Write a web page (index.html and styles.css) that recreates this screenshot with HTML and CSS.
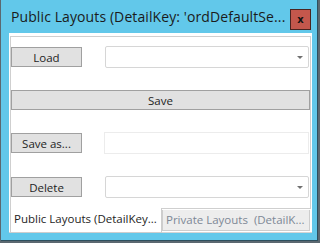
FILE: index.html
```html
<!DOCTYPE html>
<html>
<head>
  <title>Public Layouts</title>
  <link rel="stylesheet" href="styles.css">
</head>
<body>
  <div class="window">
    <div class="titlebar">
      <span class="title">Public Layouts (DetailKey: 'ordDefaultSe...</span>
      <button class="close">x</button>
    </div>
    <div class="client">
      <div class="page">
        <div class="row">
          <button class="butt">Load</button>
          <div class="combo"><span class="arrow"></span></div>
        </div>
        <div class="row">
          <button class="butt wide">Save</button>
        </div>
        <div class="row">
          <button class="butt">Save as...</button>
          <div class="textbox"></div>
        </div>
        <div class="row">
          <button class="butt">Delete</button>
          <div class="combo"><span class="arrow"></span></div>
        </div>
      </div>
      <div class="tabs">
        <div class="tab selected">Public Layouts (DetailKey...</div>
        <div class="tab">Private Layouts&nbsp; (DetailK...</div>
      </div>
    </div>
  </div>
</body>
</html>
```

FILE: styles.css
```css
html,
body {
  margin: 0;
  width: 320px;
  height: 243px;
  background-color: #5b6870;
  font-family: "Open Sans", sans-serif;
  overflow: hidden;
}

.window {
  margin-left: 1px;
  width: 317px;
  height: 241px;
  background-color: #62c8ea;
  border-right: 1px solid #2d4f5e;
  border-bottom: 1px solid #2d4f5e;
  box-sizing: border-box;
  display: flex;
  flex-direction: column;
}

.titlebar {
  height: 33px;
  display: flex;
  align-items: center;
  padding: 0 6px 0 10px;
  box-sizing: border-box;
}

.title {
  flex: 1;
  font-size: 14px;
  letter-spacing: 0.1px;
  color: #1b1b1b;
  white-space: nowrap;
  padding-bottom: 1px;
}

.close {
  width: 21px;
  height: 21px;
  margin-top: 5px;
  padding: 0;
  background-color: #c4574c;
  border: 1px solid #4a2420;
  font-family: "DejaVu Sans", sans-serif;
  font-weight: bold;
  font-size: 10px;
  line-height: 17px;
  color: #111111;
}

.client {
  margin: 0 5px 0 8px;
  height: 200px;
  background-color: #ffffff;
  border-bottom: 1px solid #d4d4d4;
  padding-top: 3px;
  box-sizing: border-box;
  display: flex;
  flex-direction: column;
}

.page {
  margin: 0 1px;
  height: 173px;
  border: 1px solid #cfcfcf;
  box-sizing: border-box;
  padding: 9px 0 0 0;
}

.row {
  height: 22px;
  display: flex;
  align-items: center;
  margin-bottom: 21px;
}

.row:nth-child(3) {
  margin-bottom: 22px;
}

.butt {
  width: 71px;
  height: 20px;
  padding: 0;
  background-color: #e1e1e1;
  border: 1px solid #a0a0a0;
  font-family: "Open Sans", sans-serif;
  font-size: 11.5px;
  color: #1e1e1e;
}

.butt.wide {
  width: 100%;
}

.combo,
.textbox {
  margin-left: auto;
  margin-right: 1px;
  width: 204px;
  height: 22px;
  border: 1px solid #d6d6d6;
  border-radius: 2px;
  box-sizing: border-box;
  background-color: #ffffff;
  position: relative;
}

.textbox {
  border-color: #ececec;
  border-radius: 0;
  width: 205px;
}

.arrow {
  position: absolute;
  right: 5px;
  top: 9px;
  border-left: 3px solid transparent;
  border-right: 3px solid transparent;
  border-top: 3px solid #707070;
}

.tabs {
  display: flex;
  margin-left: 1px;
}

.tab {
  height: 21px;
  margin-top: 1px;
  padding: 0 0 0 3px;
  width: 148px;
  box-sizing: border-box;
  border: 1px solid #cdcdcd;
  border-top: none;
  background-color: #ededed;
  font-size: 11.5px;
  line-height: 20px;
  color: #7d8896;
  white-space: nowrap;
  overflow: hidden;
}

.tab.selected {
  margin-top: -1px;
  height: 25px;
  width: 152px;
  padding-top: 1px;
  background-color: #ffffff;
  color: #1e1e1e;
}
```
